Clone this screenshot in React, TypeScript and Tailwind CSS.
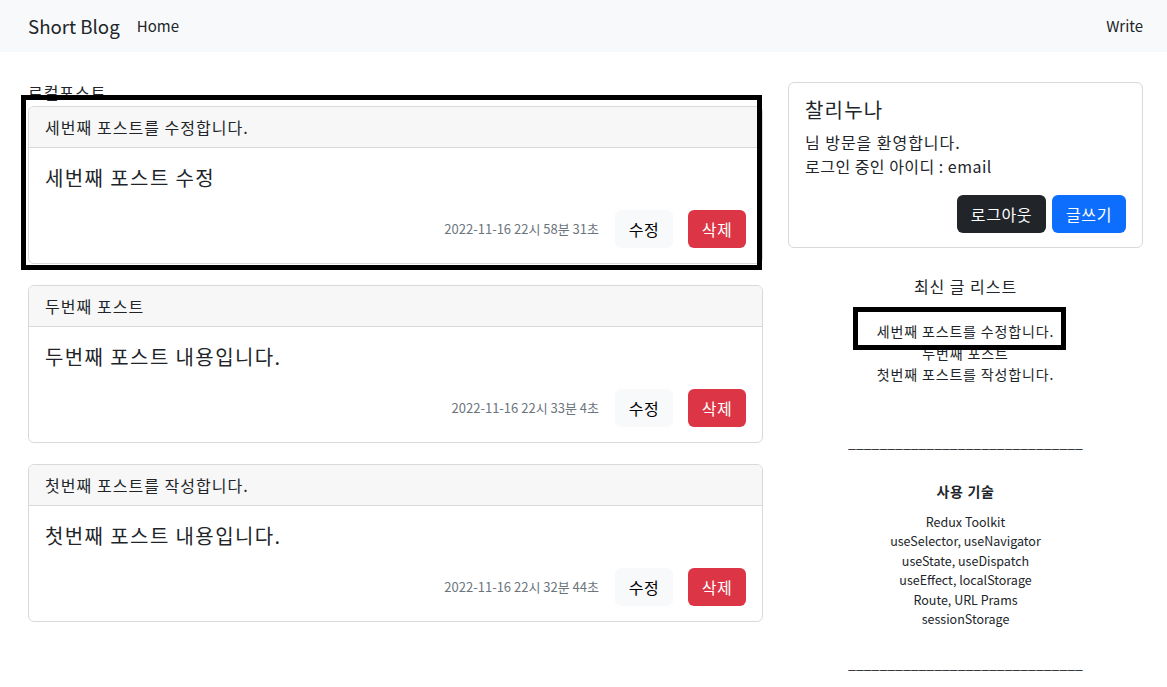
import React from "react";

const posts = [
  { title: "세번째 포스트를 수정합니다.", body: "세번째 포스트 수정", date: "2022-11-16 22시 58분 31초" },
  { title: "두번째 포스트", body: "두번째 포스트 내용입니다.", date: "2022-11-16 22시 33분 4초" },
  { title: "첫번째 포스트를 작성합니다.", body: "첫번째 포스트 내용입니다.", date: "2022-11-16 22시 32분 44초" },
];

const techs = [
  "Redux Toolkit",
  "useSelector, useNavigator",
  "useState, useDispatch",
  "useEffect, localStorage",
  "Route, URL Prams",
  "sessionStorage",
];

function PostCard({ title, body, date }: { title: string; body: string; date: string }) {
  return (
    <div className="h-[158px] mb-[21px] border border-[#d9d9d9] rounded-[6px] flex flex-col bg-white overflow-hidden">
      <div className="h-[41px] px-[16px] flex items-center bg-[#f7f7f7] border-b border-[#d9d9d9] text-[16px] tracking-[0.065em] text-[#212529]">
        {title}
      </div>
      <div className="flex-1 px-[16px] pt-[15px] pb-[15px] flex flex-col">
        <div className="text-[20px] leading-[30px] tracking-[0.07em] text-[#212529]">{body}</div>
        <div className="mt-auto flex items-center justify-end">
          <span className="text-[13px] text-[#6c757d] mr-[16px]">{date}</span>
          <button className="h-[38px] w-[58px] rounded-[6px] bg-[#f8f9fa] text-[16px] tracking-[0.04em] text-[#000]">수정</button>
          <button className="h-[38px] w-[58px] ml-[15px] rounded-[6px] bg-[#dc3545] text-[16px] tracking-[0.04em] text-white">삭제</button>
        </div>
      </div>
    </div>
  );
}

export default function App() {
  return (
    <div className="relative min-h-[687px] bg-white text-[#212529] font-['Noto_Sans_CJK_KR',sans-serif]">
      <nav className="h-[52px] bg-[#f8f9fa] flex items-center pl-[28px] pr-[24px]">
        <span className="text-[18.7px] text-[#212529] mr-[17px]">Short Blog</span>
        <span className="text-[15px] text-[#212529]">Home</span>
        <span className="ml-auto text-[15px] text-[#212529]">Write</span>
      </nav>
      <div className="flex pl-[28px] pr-[24px]">
        <div className="w-[735px]">
          <div className="pt-[28px] h-[54px] text-[16px] leading-[24px] tracking-[0.06em]">로컬포스트</div>
          {posts.map((p) => (
            <PostCard key={p.date} {...p} />
          ))}
        </div>
        <div className="w-[355px] ml-[25px] pt-[30px]">
          <div className="h-[166px] border border-[#d9d9d9] rounded-[6px] px-[16px] pt-[15px] pb-[14px] flex flex-col">
            <div className="text-[20px] leading-[24px] mb-[8px] tracking-[0.06em]">찰리누나</div>
            <div className="text-[16px] leading-[24px] tracking-[0.06em]">님 방문을 환영합니다.</div>
            <div className="text-[16px] leading-[24px] tracking-[0.03em]">로그인 중인 아이디 : email</div>
            <div className="mt-auto flex justify-end gap-[6px]">
              <button className="h-[38px] w-[89px] rounded-[6px] bg-[#212529] text-white text-[16px] tracking-[0.04em]">로그아웃</button>
              <button className="h-[38px] w-[74px] rounded-[6px] bg-[#0d6efd] text-white text-[16px] tracking-[0.04em]">글쓰기</button>
            </div>
          </div>
          <div className="text-center">
            <div className="mt-[26px] text-[16px] leading-[24px] tracking-[0.06em]">최신 글 리스트</div>
            <div className="mt-[23px] text-[14px] leading-[21.5px] tracking-[0.06em]">
              <div>세번째 포스트를 수정합니다.</div>
              <div>두번째 포스트</div>
              <div>첫번째 포스트를 작성합니다.</div>
            </div>
            <div className="mt-[46px] text-[14px] leading-[21px]">______________________________</div>
            <div className="mt-[28px] text-[14px] leading-[21px] font-bold tracking-[0.05em]">사용 기술</div>
            <div className="mt-[10px] text-[12.5px] leading-[19.6px]">
              {techs.map((t) => (
                <div key={t}>{t}</div>
              ))}
            </div>
            <div className="mt-[24px] text-[14px] leading-[21px]">______________________________</div>
          </div>
        </div>
      </div>
      <div className="absolute left-[21px] top-[95px] w-[741px] h-[175px] border-[5px] border-black pointer-events-none" />
      <div className="absolute left-[853px] top-[307px] w-[213px] h-[43px] border-[5px] border-black pointer-events-none" />
    </div>
  );
}
